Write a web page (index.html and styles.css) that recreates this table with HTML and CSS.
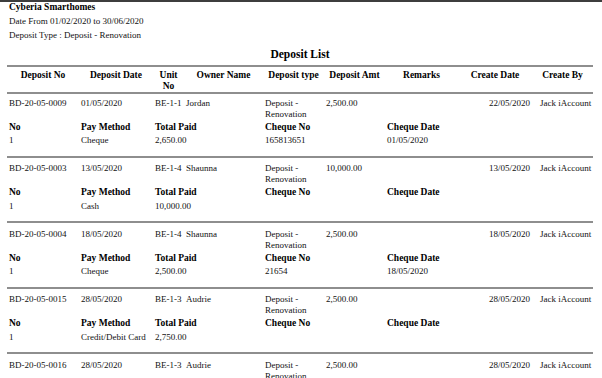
FILE: index.html
```html
<!DOCTYPE html>
<html>
<head>
<meta charset="utf-8">
<link rel="stylesheet" href="styles.css">
</head>
<body>
<div class="page">
  <div class="company">Cyberia Smarthomes</div>
  <div class="meta">Date From 01/02/2020 to 30/06/2020</div>
  <div class="meta">Deposit Type : Deposit - Renovation</div>
  <div class="title">Deposit List</div>
  <table class="list">
    <colgroup>
      <col class="c1"><col class="c2"><col class="c3"><col class="c4"><col class="c5"><col class="c6"><col class="c7"><col class="c8"><col class="c9">
    </colgroup>
    <thead>
      <tr>
        <th>Deposit No</th><th>Deposit Date</th><th class="wrap">Unit No</th><th>Owner Name</th><th>Deposit type</th><th>Deposit Amt</th><th>Remarks</th><th>Create Date</th><th>Create By</th>
      </tr>
    </thead>
    <tbody class="block">
      <tr class="main"><td>BD-20-05-0009</td><td>01/05/2020</td><td>BE-1-1</td><td>Jordan</td><td class="wrap">Deposit - Renovation</td><td>2,500.00</td><td></td><td class="right">22/05/2020</td><td class="by">Jack iAccount</td></tr>
      <tr class="labels"><td>No</td><td>Pay Method</td><td colspan="2">Total Paid</td><td colspan="2">Cheque No</td><td colspan="3">Cheque Date</td></tr>
      <tr class="values"><td>1</td><td>Cheque</td><td colspan="2">2,650.00</td><td colspan="2">165813651</td><td colspan="3">01/05/2020</td></tr>
    </tbody>
    <tbody class="block">
      <tr class="main"><td>BD-20-05-0003</td><td>13/05/2020</td><td>BE-1-4</td><td>Shaunna</td><td class="wrap">Deposit - Renovation</td><td>10,000.00</td><td></td><td class="right">13/05/2020</td><td class="by">Jack iAccount</td></tr>
      <tr class="labels"><td>No</td><td>Pay Method</td><td colspan="2">Total Paid</td><td colspan="2">Cheque No</td><td colspan="3">Cheque Date</td></tr>
      <tr class="values"><td>1</td><td>Cash</td><td colspan="2">10,000.00</td><td colspan="2"></td><td colspan="3"></td></tr>
    </tbody>
    <tbody class="block">
      <tr class="main"><td>BD-20-05-0004</td><td>18/05/2020</td><td>BE-1-4</td><td>Shaunna</td><td class="wrap">Deposit - Renovation</td><td>2,500.00</td><td></td><td class="right">18/05/2020</td><td class="by">Jack iAccount</td></tr>
      <tr class="labels"><td>No</td><td>Pay Method</td><td colspan="2">Total Paid</td><td colspan="2">Cheque No</td><td colspan="3">Cheque Date</td></tr>
      <tr class="values"><td>1</td><td>Cheque</td><td colspan="2">2,500.00</td><td colspan="2">21654</td><td colspan="3">18/05/2020</td></tr>
    </tbody>
    <tbody class="block">
      <tr class="main"><td>BD-20-05-0015</td><td>28/05/2020</td><td>BE-1-3</td><td>Audrie</td><td class="wrap">Deposit - Renovation</td><td>2,500.00</td><td></td><td class="right">28/05/2020</td><td class="by">Jack iAccount</td></tr>
      <tr class="labels"><td>No</td><td>Pay Method</td><td colspan="2">Total Paid</td><td colspan="2">Cheque No</td><td colspan="3">Cheque Date</td></tr>
      <tr class="values"><td>1</td><td>Credit/Debit Card</td><td colspan="2">2,750.00</td><td colspan="2"></td><td colspan="3"></td></tr>
    </tbody>
    <tbody class="block">
      <tr class="main"><td>BD-20-05-0016</td><td>28/05/2020</td><td>BE-1-3</td><td>Audrie</td><td class="wrap">Deposit - Renovation</td><td>2,500.00</td><td></td><td class="right">28/05/2020</td><td class="by">Jack iAccount</td></tr>
      <tr class="labels"><td>No</td><td>Pay Method</td><td colspan="2">Total Paid</td><td colspan="2">Cheque No</td><td colspan="3">Cheque Date</td></tr>
      <tr class="values"><td>1</td><td>Cheque</td><td colspan="2">2,500.00</td><td colspan="2"></td><td colspan="3"></td></tr>
    </tbody>
  </table>
</div>
</body>
</html>
```
FILE: styles.css
```css
html, body {
  margin: 0;
  padding: 0;
  background: #ffffff;
}
body {
  font-family: "Liberation Serif", "Times New Roman", serif;
  font-size: 9px;
  color: #111111;
}
.page {
  border-top: 2px solid #3d3d3d;
  padding: 0 9px 0 7px;
}
.company {
  font-weight: bold;
  font-size: 9.5px;
  line-height: 11px;
  padding-left: 2px;
  color: #000;
}
.meta {
  line-height: 11px;
  padding-left: 2px;
  margin-top: 3px;
}
.meta + .meta {
  margin-top: 2.5px;
}
.title {
  text-align: center;
  font-weight: bold;
  font-size: 11.5px;
  line-height: 14px;
  margin-top: 6.5px;
  color: #000;
}
.list {
  width: 586px;
  border-collapse: collapse;
  table-layout: fixed;
  margin-top: 4px;
}
.c1 { width: 72px; }
.c2 { width: 74px; }
.c3 { width: 31px; }
.c4 { width: 79px; }
.c5 { width: 61px; }
.c6 { width: 61px; }
.c7 { width: 73px; }
.c8 { width: 74px; }
.c9 { width: 61px; }
.list th {
  border-top: 2px solid #8e8e8e;
  border-bottom: 2px solid #8e8e8e;
  padding: 3px 2px 0;
  vertical-align: top;
  line-height: 11px;
  font-size: 9.5px;
  font-weight: bold;
  text-align: center;
  white-space: nowrap;
  color: #000;
}
.list th.wrap {
  white-space: normal;
}
.list td {
  padding: 0 2px;
  line-height: 11px;
  vertical-align: top;
  text-align: left;
  white-space: nowrap;
}
.list td.wrap {
  white-space: normal;
}
.list td.right {
  text-align: right;
}
.list td.by {
  padding-left: 8px;
}
.block + .block {
  border-top: 2px solid #8e8e8e;
}
.main td {
  padding-top: 5.5px;
}
.block:first-of-type .main td {
  padding-top: 3.5px;
}
.labels td {
  padding-top: 2px;
  font-weight: bold;
  font-size: 9.5px;
  color: #000;
}
.values td {
  padding-top: 2.5px;
  padding-bottom: 9.5px;
}
```
